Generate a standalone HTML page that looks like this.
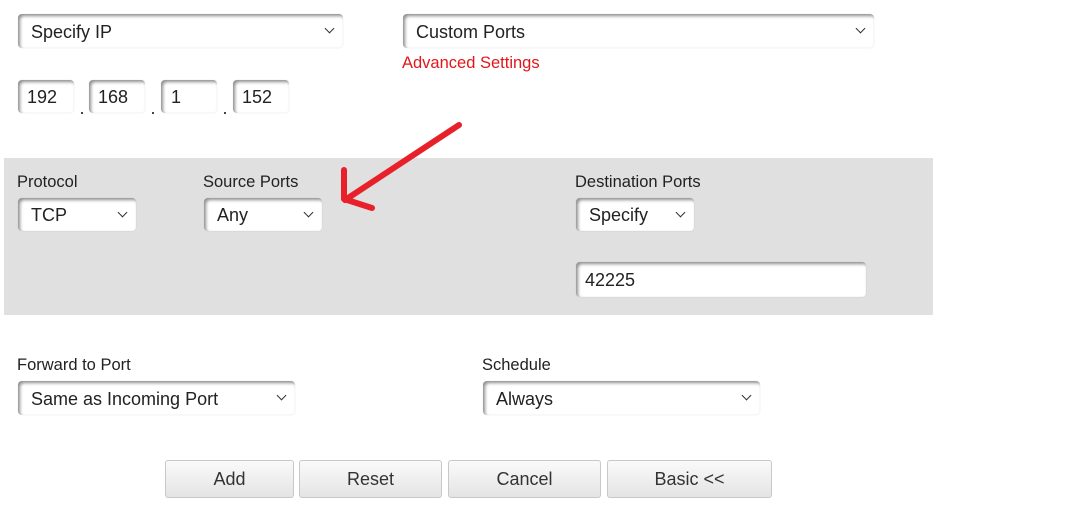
<!DOCTYPE html>
<html><head><style>
body{margin:0;width:1066px;height:505px;background:#fff;position:relative;overflow:hidden;font-family:"Liberation Sans",Roboto,sans-serif;color:#222}
.a{position:absolute}
.in{position:absolute;box-sizing:border-box;background:#fff;border-radius:4px;box-shadow:inset 2px 2px 3px rgba(0,0,0,.45),0 0 1px rgba(0,0,0,.15);font-size:18px;padding-left:13px;padding-top:2px;display:flex;align-items:center;color:#222}
.sel::after{content:"";position:absolute;right:10px;top:11px;width:6px;height:6px;border-right:1.5px solid #333;border-bottom:1.5px solid #333;transform:rotate(45deg)}
.lbl{position:absolute;font-size:16.5px;color:#222}
.btn{position:absolute;top:460px;height:38px;box-sizing:border-box;border:1px solid #c8c8c8;border-radius:3px;background:linear-gradient(#fafafa,#e4e4e4);font-size:18px;display:flex;align-items:center;justify-content:center;color:#333}
.dot{position:absolute;width:2px;height:2px;background:#444;top:112px}
</style></head><body>
<div class="in sel" style="left:18px;top:14px;width:325px;height:34px">Specify IP</div>
<div class="in sel" style="left:403px;top:14px;width:471px;height:34px">Custom Ports</div>
<div class="a" style="left:402px;top:54px;font-size:16.5px;color:#e3161b">Advanced Settings</div>
<div class="in" style="left:18px;top:80px;width:56px;height:33px;padding-left:9px">192</div>
<div class="in" style="left:89px;top:80px;width:56px;height:33px;padding-left:9px">168</div>
<div class="in" style="left:161px;top:80px;width:56px;height:33px;padding-left:10px">1</div>
<div class="in" style="left:233px;top:80px;width:56px;height:33px;padding-left:9px">152</div>
<div class="dot" style="left:81px"></div><div class="dot" style="left:152px"></div><div class="dot" style="left:224px"></div>
<div class="a" style="left:4px;top:158px;width:929px;height:157px;background:#e0e0e0"></div>
<div class="lbl" style="left:17px;top:173px">Protocol</div>
<div class="lbl" style="left:203px;top:173px">Source Ports</div>
<div class="lbl" style="left:575px;top:173px">Destination Ports</div>
<div class="in sel" style="left:18px;top:198px;width:118px;height:33px">TCP</div>
<div class="in sel" style="left:204px;top:198px;width:118px;height:33px">Any</div>
<div class="in sel" style="left:576px;top:198px;width:118px;height:33px">Specify</div>
<div class="in" style="left:576px;top:262px;width:290px;height:35px;padding-left:9px">42225</div>
<div class="lbl" style="left:17px;top:356px">Forward to Port</div>
<div class="lbl" style="left:482px;top:356px">Schedule</div>
<div class="in sel" style="left:18px;top:381px;width:277px;height:34px">Same as Incoming Port</div>
<div class="in sel" style="left:483px;top:381px;width:277px;height:34px">Always</div>
<div class="btn" style="left:165px;width:129px">Add</div>
<div class="btn" style="left:299px;width:143px">Reset</div>
<div class="btn" style="left:448px;width:153px">Cancel</div>
<div class="btn" style="left:607px;width:165px">Basic &lt;&lt;</div>
<svg class="a" style="left:0;top:0" width="1066" height="505"><path d="M459 125 L345 200 M344 170 L344 199 L372 208" fill="none" stroke="#e8202a" stroke-width="6" stroke-linecap="round" stroke-linejoin="round"/></svg>
</body></html>
